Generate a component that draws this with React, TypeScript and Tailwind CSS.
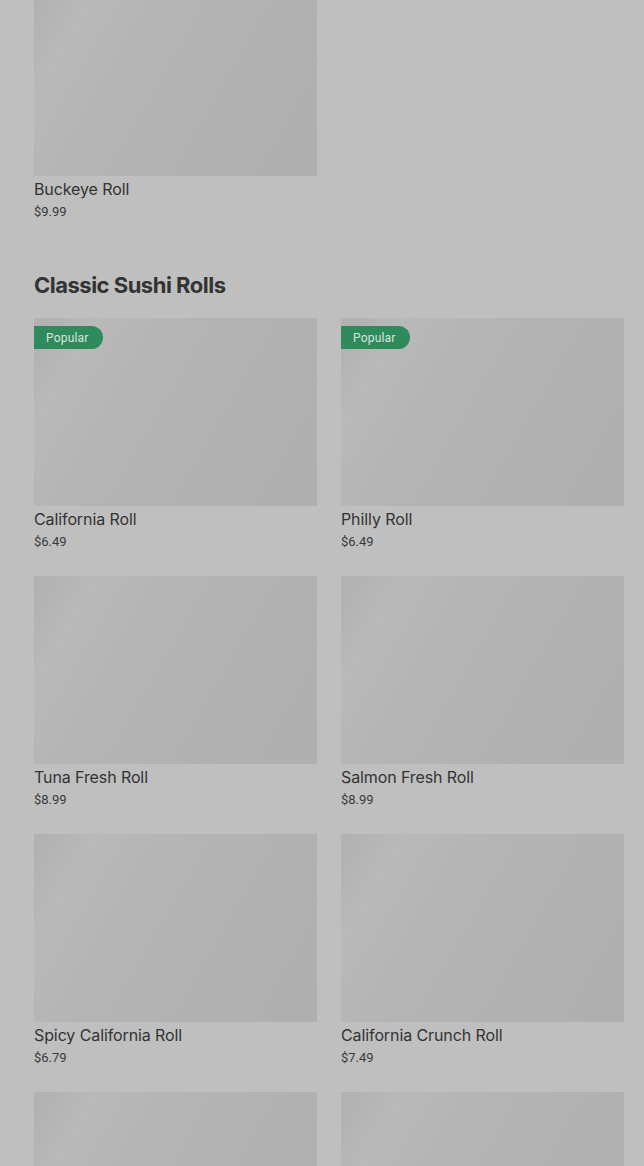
import React from 'react';

type Item = { name: string; price: string; popular?: boolean };

const classics: Item[] = [
  { name: 'California Roll', price: '$6.49', popular: true },
  { name: 'Philly Roll', price: '$6.49', popular: true },
  { name: 'Tuna Fresh Roll', price: '$8.99' },
  { name: 'Salmon Fresh Roll', price: '$8.99' },
  { name: 'Spicy California Roll', price: '$6.79' },
  { name: 'California Crunch Roll', price: '$7.49' },
  { name: '', price: '' },
  { name: '', price: '' },
];

function MenuCard({ item }: { item: Item }) {
  return (
    <div className="flex flex-col">
      {/* placeholder image, shimmer look under the dim overlay */}
      <div className="relative h-[188px] w-full bg-[linear-gradient(120deg,#b2b2b2_4%,#b9b9b9_16%,#b5b5b5_32%,#b1b1b1_70%,#afafaf_100%)]">
        {item.popular && (
          <span className="absolute left-0 top-2 flex h-[23px] items-center rounded-r-full bg-[#2f8a5c] pl-3 pr-[14px] text-[12px] tracking-[0.2px] text-[#d6e7dc]">
            Popular
          </span>
        )}
      </div>
      {item.name && (
        <>
          <p className="mt-[2px] font-['Inter',sans-serif] text-[16px] leading-[22px] tracking-[-0.1px] text-[#333333]">
            {item.name}
          </p>
          <p className="mt-[2px] text-[13px] leading-[20px] text-[#3a3a3a]">{item.price}</p>
        </>
      )}
    </div>
  );
}

export default function App() {
  return (
    <div
      className="min-h-[1166px] overflow-hidden bg-[#bfbfbf] pl-[34px] pr-[20px]"
      style={{ fontFamily: 'Roboto, "Liberation Sans", sans-serif' }}
    >
      {/* previous section tail */}
      <div className="-mt-[12px] grid grid-cols-2 gap-x-6">
        <MenuCard item={{ name: 'Buckeye Roll', price: '$9.99' }} />
      </div>

      <section className="mt-[49px]">
        <h2 className="font-['Inter',sans-serif] text-[22px] font-bold leading-[28px] tracking-[-0.5px] text-[#333333]">
          Classic Sushi Rolls
        </h2>
        <div className="mt-[19px] grid grid-cols-2 gap-x-6 gap-y-6">
          {classics.map((it, i) => (
            <MenuCard key={i} item={it} />
          ))}
        </div>
      </section>
    </div>
  );
}
